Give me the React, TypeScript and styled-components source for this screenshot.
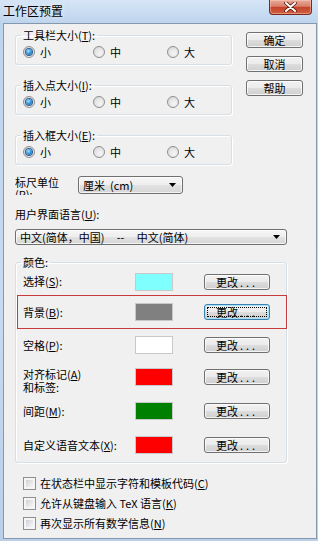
import React from 'react'
import styled, { createGlobalStyle, css } from 'styled-components'

const uiFont = `"Noto Sans CJK SC", "Noto Sans", "Liberation Sans", sans-serif`

const GlobalStyle = createGlobalStyle`
	html, body {
		margin: 0;
		padding: 0;
	}
	body {
		font-family: ${uiFont};
		font-size: 11px;
		color: #000;
	}
`

const Window = styled.div`
	width: 318px;
	height: 541px;
	box-sizing: border-box;
	display: flex;
	flex-direction: column;
	background: linear-gradient(180deg, #d6e5f6 0%, #bdd4ed 23px, #c6daf0 55%, #bad0e9 100%);
`

const TitleBar = styled.div`
	height: 23px;
	flex-shrink: 0;
	display: flex;
	align-items: flex-start;
	justify-content: space-between;
`

const Title = styled.div`
	padding: 4px 0 0 3px;
	font-size: 12px;
	line-height: 14px;
	color: #000;
	text-shadow: 0 0 6px rgba(255, 255, 255, 0.9);
`

const CloseButton = styled.div`
	width: 43px;
	height: 15px;
	margin-right: 6px;
	box-sizing: border-box;
	border: 1px solid #7a2a1d;
	border-top: none;
	border-radius: 0 0 4px 4px;
	background: linear-gradient(180deg, #e9ab99 0%, #d8806a 45%, #c4432b 52%, #d0603f 100%);
	box-shadow: inset 0 0 0 1px rgba(255, 210, 195, 0.45);
	display: flex;
	align-items: center;
	justify-content: center;
`

const Client = styled.div`
	flex: 1;
	margin: 0 1px 2px 3px;
	border: 1px solid #8598ae;
	background: #f0f0f0;
	padding: 0 0 0 11px;
	display: flex;
	flex-direction: column;
`

const TopSection = styled.div`
	display: flex;
	align-items: flex-start;
`

const GroupColumn = styled.div`
	width: 217px;
	padding-top: 5px;
	display: flex;
	flex-direction: column;
	gap: 14px;
`

const ButtonColumn = styled.div`
	margin-left: 14px;
	padding-top: 8px;
	display: flex;
	flex-direction: column;
	gap: 8px;
`

const Group = styled.fieldset<{ $width?: number }>`
	margin: 0;
	min-width: 0;
	width: ${(p) => (p.$width ? `${p.$width}px` : 'auto')};
	box-sizing: border-box;
	border: 1px solid #d5dfe5;
	border-radius: 3px;
	box-shadow: inset 1px 1px 0 #fff, 1px 1px 0 #fff;
	padding: 4px 0 5px 7px;
`

const ColorGroup = styled(Group)`
	padding: 0 0 1px 7px;
	margin-top: 11px;
`

const Legend = styled.legend`
	padding: 0 2px;
	margin-left: -2px;
	font-size: 11px;
	line-height: 12px;
`

const RadioRow = styled.div`
	display: grid;
	grid-template-columns: 70px 74px auto;
	height: 14px;
	align-items: center;
`

const RadioLabel = styled.label`
	display: flex;
	align-items: center;
	gap: 5px;
	line-height: 12px;
`

const RadioCircle = styled.span<{ $checked?: boolean }>`
	width: 12px;
	height: 12px;
	box-sizing: border-box;
	border-radius: 50%;
	border: 1px solid #8f8f8f;
	background: radial-gradient(circle at 60% 65%, #f6f6f6 0%, #e4e4e4 55%, #cfcfcf 100%);
	display: flex;
	align-items: center;
	justify-content: center;
	&::after {
		content: '';
		display: ${(p) => (p.$checked ? 'block' : 'none')};
		width: 6px;
		height: 6px;
		border-radius: 50%;
		background: radial-gradient(circle at 40% 35%, #b4e4fb 0%, #3b9be0 45%, #14508a 100%);
		box-shadow: 0 0 0 1px #2c5f8e;
	}
`

const WinButton = styled.button<{ $width?: number; $focused?: boolean }>`
	width: ${(p) => p.$width ?? 57}px;
	height: 16px;
	padding: 0;
	box-sizing: border-box;
	font-family: ${uiFont};
	font-size: 11px;
	line-height: 14px;
	color: #000;
	border: 1px solid #707070;
	border-radius: 3px;
	background: linear-gradient(180deg, #f2f2f2 0%, #ebebeb 50%, #dddddd 51%, #cfcfcf 100%);
	box-shadow: inset 0 0 0 1px rgba(255, 255, 255, 0.75);
	${(p) =>
		p.$focused &&
		css`
			border-color: #3c7fb1;
			box-shadow: inset 0 0 0 1px #a6e2f7;
			outline: 1px dotted #000;
			outline-offset: -4px;
		`}
`

const Dots = styled.span`
	letter-spacing: 3px;
	margin-left: 2px;
`

const RulerRow = styled.div`
	display: flex;
	align-items: flex-start;
	margin-top: 11px;
`

const RulerLabel = styled.div`
	width: 50px;
	height: 19px;
	margin-right: 13px;
	overflow: hidden;
	line-height: 12px;
`

const Combo = styled.div<{ $width: number; $height: number }>`
	width: ${(p) => p.$width}px;
	height: ${(p) => p.$height}px;
	box-sizing: border-box;
	border: 1px solid #707070;
	border-radius: 3px;
	background: linear-gradient(180deg, #f6f6f6 0%, #eeeeee 50%, #e2e2e2 51%, #d6d6d6 100%);
	box-shadow: inset 0 0 0 1px rgba(255, 255, 255, 0.7);
	display: flex;
	align-items: center;
	justify-content: space-between;
	padding: 0 6px 0 4px;
	white-space: pre;
	line-height: 12px;
`

const FieldLabel = styled.div`
	margin-top: 13px;
	line-height: 12px;
`

const LanguageCombo = styled(Combo)`
	margin-top: 9px;
`

const ColorRow = styled.div<{ $height: number; $highlight?: boolean }>`
	height: ${(p) => p.$height}px;
	box-sizing: border-box;
	margin: 0 -1px 0 -6px;
	padding-left: 5px;
	border: 1px solid ${(p) => (p.$highlight ? '#c83a3a' : 'transparent')};
	display: flex;
	align-items: center;
`

const ColorLabel = styled.div<{ $top?: number }>`
	width: 112px;
	line-height: 13px;
	${(p) =>
		p.$top !== undefined &&
		css`
			align-self: flex-start;
			margin-top: ${p.$top}px;
		`}
`

const Swatch = styled.div<{ $color: string }>`
	width: 38px;
	height: 18px;
	box-sizing: border-box;
	margin-right: 31px;
	background: ${(p) => p.$color};
	border: 1px solid #c9c9c9;
`

const CheckList = styled.div`
	margin: 10px 0 0 8px;
	display: flex;
	flex-direction: column;
`

const CheckRow = styled.label`
	height: 20px;
	display: flex;
	align-items: center;
	gap: 4px;
	line-height: 12px;
`

const CheckBox = styled.span`
	width: 13px;
	height: 13px;
	box-sizing: border-box;
	border: 1px solid #8f8f8f;
	background: #f5f5f5;
	padding: 2px;
	&::after {
		content: '';
		display: block;
		width: 7px;
		height: 7px;
		background: linear-gradient(135deg, #cdd0d4 0%, #e6e7e9 55%, #f7f7f7 100%);
	}
`

const Arrow = () => (
	<svg width="7" height="4" viewBox="0 0 7 4">
		<path d="M0 0H7L3.5 4Z" fill="#000" />
	</svg>
)

const CloseGlyph = () => (
	<svg width="13" height="10" viewBox="0 0 13 10">
		<path d="M2 1L11 9M11 1L2 9" stroke="#5a1a10" strokeWidth="3.6" strokeLinecap="round" />
		<path d="M2 1L11 9M11 1L2 9" stroke="#fff" strokeWidth="2" strokeLinecap="round" />
	</svg>
)

const sizeGroups = [
	{ title: '工具栏大小', key: 'T' },
	{ title: '插入点大小', key: 'I' },
	{ title: '插入框大小', key: 'E' },
]

const colorRows = [
	{ name: '选择', key: 'S', color: '#80ffff', height: 27 },
	{ name: '背景', key: 'B', color: '#808080', height: 34, highlight: true, focused: true },
	{ name: '空格', key: 'P', color: '#ffffff', height: 32 },
	{ name: '对齐标记', key: 'A', color: '#ff0000', height: 32, second: '和标签:' },
	{ name: '间距', key: 'M', color: '#008000', height: 36 },
	{ name: '自定义语音文本', key: 'X', color: '#ff0000', height: 32 },
]

const options = [
	{ text: '在状态栏中显示字符和模板代码', key: 'C' },
	{ text: '允许从键盘输入 TeX 语言', key: 'K' },
	{ text: '再次显示所有数学信息', key: 'N' },
]

const App: React.FC = () => {
	return (
		<>
			<GlobalStyle />
			<Window>
				<TitleBar>
					<Title>工作区预置</Title>
					<CloseButton>
						<CloseGlyph />
					</CloseButton>
				</TitleBar>
				<Client>
					<TopSection>
						<GroupColumn>
							{sizeGroups.map((g) => (
								<Group key={g.key}>
									<Legend>
										{g.title}(<u>{g.key}</u>):
									</Legend>
									<RadioRow>
										<RadioLabel>
											<RadioCircle $checked />小
										</RadioLabel>
										<RadioLabel>
											<RadioCircle />中
										</RadioLabel>
										<RadioLabel>
											<RadioCircle />大
										</RadioLabel>
									</RadioRow>
								</Group>
							))}
						</GroupColumn>
						<ButtonColumn>
							<WinButton>确定</WinButton>
							<WinButton>取消</WinButton>
							<WinButton>帮助</WinButton>
						</ButtonColumn>
					</TopSection>

					<RulerRow>
						<RulerLabel>
							标尺单位(<u>R</u>):
						</RulerLabel>
						<Combo $width={105} $height={18}>
							<span>厘米  (cm)</span>
							<Arrow />
						</Combo>
					</RulerRow>

					<FieldLabel>
						用户界面语言(<u>U</u>):
					</FieldLabel>
					<LanguageCombo $width={272} $height={16}>
						<span>中文(简体，中国)     --     中文(简体)</span>
						<Arrow />
					</LanguageCombo>

					<ColorGroup $width={272}>
						<Legend>颜色:</Legend>
						{colorRows.map((r) => (
							<ColorRow key={r.key} $height={r.height} $highlight={r.highlight}>
								<ColorLabel $top={r.second ? 6 : undefined}>
									{r.name}(<u>{r.key}</u>){r.second ? '' : ':'}
									{r.second && (
										<>
											<br />
											{r.second}
										</>
									)}
								</ColorLabel>
								<Swatch $color={r.color} />
								<WinButton $width={66} $focused={r.focused}>
									更改<Dots>...</Dots>
								</WinButton>
							</ColorRow>
						))}
					</ColorGroup>

					<CheckList>
						{options.map((o) => (
							<CheckRow key={o.key}>
								<CheckBox />
								<span>
									{o.text}(<u>{o.key}</u>)
								</span>
							</CheckRow>
						))}
					</CheckList>
				</Client>
			</Window>
		</>
	)
}

export default App
